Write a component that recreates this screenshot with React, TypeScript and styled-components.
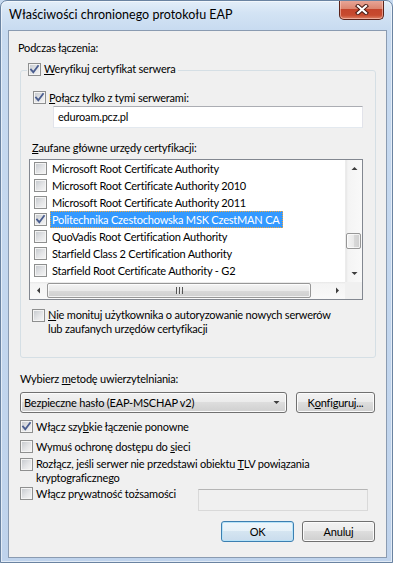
import React from "react";
import styled, { createGlobalStyle } from "styled-components";

const Global = createGlobalStyle`
  html, body { margin: 0; padding: 0; background: #c6d9ef; }
  body { font-family: Lato, "Noto Sans", sans-serif; font-size: 11px; letter-spacing: -0.2px; color: #000; }
  * { box-sizing: border-box; }
`;

const Window = styled.div`
  width: 393px;
  height: 563px;
  border: 1px solid #6a83a1;
  border-radius: 7px 7px 0 0;
  background: linear-gradient(180deg, #e3eef9 0px, #d3e3f4 12px, #c7daf0 30px, #bfd3ec 100%);
  box-shadow: inset 0 0 0 1px rgba(255, 255, 255, 0.55);
  display: flex;
  flex-direction: column;
  overflow: hidden;
`;

const TitleBar = styled.div`
  height: 29px;
  display: flex;
  align-items: flex-start;
  justify-content: space-between;
  padding-left: 8px;
`;

const Title = styled.div`
  font-size: 12.5px;
  letter-spacing: 0;
  line-height: 15px;
  margin-top: 6px;
  color: #000;
`;

const CloseBtn = styled.div`
  width: 45px;
  height: 20px;
  margin-top: -1px;
  margin-right: 8px;
  border: 1px solid #5a2219;
  border-top: none;
  border-radius: 0 0 5px 5px;
  background: linear-gradient(180deg, #e9a99b 0%, #dc8670 45%, #c4452c 50%, #c74a2f 80%, #dd8266 100%);
  box-shadow: inset 0 0 0 1px rgba(255, 210, 200, 0.55);
  display: flex;
  align-items: center;
  justify-content: center;
`;

const Client = styled.div`
  flex: 1;
  margin: 0 5px 4px 7px;
  border: 1px solid #8a9bb1;
  background: #f0f0f0;
  display: flex;
  flex-direction: column;
`;

const Heading = styled.div`
  line-height: 15px;
  margin: 9px 0 0 9px;
`;

const Group = styled.div`
  margin: 15px 10px 0 11px;
  border: 1px solid #d5dfe5;
  border-radius: 3px;
  padding-bottom: 22px;
  display: flex;
  flex-direction: column;
  align-items: flex-start;
`;

const Legend = styled.div`
  margin: -9px 0 0 6px;
  padding: 0 3px 0 1px;
  background: #f0f0f0;
  display: flex;
  align-items: center;
  gap: 3px;
  line-height: 14px;
`;

const Row = styled.div<{ $mt: number; $ml: number }>`
  display: flex;
  align-items: flex-start;
  gap: 3px;
  margin-top: ${(p) => p.$mt}px;
  margin-left: ${(p) => p.$ml}px;
  line-height: 14px;
`;

const RowText = styled.span<{ $lh?: number }>`
  line-height: ${(p) => p.$lh ?? 14}px;
`;

const Key = styled.span`
  text-decoration: underline;
  text-underline-offset: 1px;
`;

const TextBox = styled.div`
  align-self: stretch;
  height: 22px;
  margin: 1px 12px 0 32px;
  background: #fff;
  border: 1px solid #e2e3ea;
  border-top-color: #abadb3;
  border-bottom-color: #e3e9ef;
  padding: 0 4px;
  line-height: 19px;
`;

const Label = styled.div<{ $mt: number; $ml: number }>`
  line-height: 14px;
  margin-top: ${(p) => p.$mt}px;
  margin-left: ${(p) => p.$ml}px;
`;

const ListBox = styled.div`
  align-self: stretch;
  height: 141px;
  margin: 4px 12px 0 8px;
  border: 1px solid #828790;
  background: #fff;
  display: grid;
  grid-template-columns: 1fr 17px;
  grid-template-rows: 1fr 17px;
  overflow: hidden;
`;

const Items = styled.div`
  overflow: hidden;
  display: flex;
  flex-direction: column;
`;

const Item = styled.div`
  height: 17px;
  display: flex;
  align-items: center;
  padding-left: 4px;
  gap: 3px;
  white-space: nowrap;
`;

const ItemText = styled.span<{ $sel?: boolean }>`
  padding: 0 2px 0 1px;
  line-height: 15px;
  border: 1px dotted ${(p) => (p.$sel ? "#f2a53c" : "transparent")};
  background: ${(p) => (p.$sel ? "#3399ff" : "transparent")};
  color: ${(p) => (p.$sel ? "#fff" : "#000")};
`;

const VScroll = styled.div`
  display: flex;
  flex-direction: column;
  background: linear-gradient(90deg, #e7e7e7 0px, #f4f4f4 2px, #f9f9f9 100%);
  border-left: 1px solid #ececec;
`;

const HScroll = styled.div`
  display: flex;
  background: linear-gradient(180deg, #e7e7e7 0px, #f4f4f4 2px, #f9f9f9 100%);
`;

const Corner = styled.div`
  background: #f0f0f0;
`;

const ArrowBtn = styled.div`
  width: 16px;
  height: 17px;
  flex-shrink: 0;
  display: flex;
  align-items: center;
  justify-content: center;
`;

const VThumb = styled.div<{ $top: number }>`
  margin: ${(p) => p.$top}px 1px 0 0;
  height: 16px;
  border: 1px solid #979797;
  border-radius: 2px;
  background: linear-gradient(90deg, #f4f4f4 0%, #e9e9e9 50%, #d9d9d9 51%, #cfcfcf 100%);
  box-shadow: inset 0 0 0 1px rgba(255, 255, 255, 0.7);
`;

const VSpacer = styled.div`
  flex: 1;
`;

const HThumb = styled.div<{ $w: number }>`
  width: ${(p) => p.$w}px;
  margin: 1px 0 1px 1px;
  border: 1px solid #979797;
  border-radius: 2px;
  background: linear-gradient(180deg, #f4f4f4 0%, #e9e9e9 50%, #d9d9d9 51%, #cfcfcf 100%);
  box-shadow: inset 0 0 0 1px rgba(255, 255, 255, 0.7);
  display: flex;
  align-items: center;
  justify-content: center;
`;

const HTrack = styled.div`
  flex: 1;
  display: flex;
`;

const Grip = styled.div`
  width: 7px;
  height: 7px;
  background: repeating-linear-gradient(90deg, #555 0px, #555 1px, #e8e8e8 1px, #e8e8e8 2px, transparent 2px, transparent 3px);
`;

const ComboRow = styled.div`
  display: flex;
  align-items: flex-start;
  gap: 9px;
  margin: 6px 0 0 11px;
`;

const buttonFace = `
  border: 1px solid #707070;
  border-radius: 3px;
  background: linear-gradient(180deg, #f2f2f2 0%, #ebebeb 48%, #dddddd 50%, #cfcfcf 100%);
  box-shadow: inset 0 0 0 1px #fbfbfb;
`;

const Combo = styled.div`
  ${buttonFace}
  width: 267px;
  height: 21px;
  display: flex;
  align-items: center;
  justify-content: space-between;
  padding: 0 6px 0 3px;
`;

const PushButton = styled.div<{ $w: number; $def?: boolean }>`
  ${buttonFace}
  width: ${(p) => p.$w}px;
  height: 21px;
  display: flex;
  align-items: center;
  justify-content: center;
  line-height: 14px;
  ${(p) =>
    p.$def
      ? `border-color: #3c7fb1; box-shadow: inset 0 0 0 1px #b7e3f8; background: linear-gradient(180deg, #eef6fb 0%, #e6f1f8 48%, #d5e5f1 50%, #c9dced 100%);`
      : ""}
`;

const CheckRow = styled.div<{ $mt: number }>`
  display: flex;
  align-items: flex-start;
  gap: 3px;
  margin: ${(p) => p.$mt}px 0 0 11px;
`;

const IdentityRow = styled.div`
  display: flex;
  align-items: flex-start;
  margin: 3px 0 0 11px;
`;

const IdentityLabel = styled.div`
  width: 178px;
  flex-shrink: 0;
  display: flex;
  align-items: flex-start;
  gap: 3px;
`;

const DisabledBox = styled.div`
  width: 170px;
  height: 22px;
  margin-top: 2px;
  border: 1px solid #d9d9d9;
  border-top-color: #b5b5b5;
  background: #f0f0f0;
`;

const ButtonRow = styled.div`
  display: flex;
  justify-content: flex-end;
  gap: 8px;
  margin: 10px 11px 0 0;
`;

const Box = styled.span<{ $mt?: number }>`
  width: 13px;
  height: 13px;
  flex-shrink: 0;
  margin-top: ${(p) => p.$mt ?? 0}px;
  border: 1px solid #8e8f8f;
  background: linear-gradient(135deg, #c3c7cc 0%, #e4e5e7 55%, #f6f6f6 100%);
  box-shadow: inset 0 0 0 1px #f4f4f4;
  display: inline-flex;
  align-items: center;
  justify-content: center;
`;

function Check({ on, mt }: { on?: boolean; mt?: number }) {
  return (
    <Box $mt={mt}>
      {on && (
        <svg width="11" height="11" viewBox="0 0 11 11">
          <path d="M2 5.5 L4.3 8.2 L9 2" fill="none" stroke="#4a5d8f" strokeWidth="1.8" strokeLinecap="square" />
        </svg>
      )}
    </Box>
  );
}

function Tri({ dir }: { dir: "up" | "down" | "left" | "right" }) {
  const pts = {
    up: "0.5,4 3.5,1 6.5,4",
    down: "0.5,1 3.5,4 6.5,1",
    left: "4,0.5 1,3.5 4,6.5",
    right: "1,0.5 4,3.5 1,6.5",
  }[dir];
  const vert = dir === "up" || dir === "down";
  return (
    <svg width={vert ? 7 : 5} height={vert ? 5 : 7} viewBox={vert ? "0 0 7 5" : "0 0 5 7"}>
      <polygon points={pts} fill="#3d3d3d" />
    </svg>
  );
}

const certs: { name: string; on?: boolean; sel?: boolean }[] = [
  { name: "Microsoft Root Certificate Authority" },
  { name: "Microsoft Root Certificate Authority 2010" },
  { name: "Microsoft Root Certificate Authority 2011" },
  { name: "Politechnika Czestochowska MSK CzestMAN CA", on: true, sel: true },
  { name: "QuoVadis Root Certification Authority" },
  { name: "Starfield Class 2 Certification Authority" },
  { name: "Starfield Root Certificate Authority - G2" },
];

export default function App() {
  return (
    <>
      <Global />
      <Window>
        <TitleBar>
          <Title>Właściwości chronionego protokołu EAP</Title>
          <CloseBtn>
            <svg width="14" height="11" viewBox="0 0 14 11">
              <path d="M3 2 L11 9 M11 2 L3 9" stroke="#4b1d16" strokeWidth="4.2" strokeLinecap="square" />
              <path d="M3 2 L11 9 M11 2 L3 9" stroke="#ffffff" strokeWidth="2.2" strokeLinecap="square" />
            </svg>
          </CloseBtn>
        </TitleBar>
        <Client>
          <Heading>Podczas łączenia:</Heading>
          <Group>
            <Legend>
              <Check on />
              <span>
                <Key>W</Key>eryfikuj certyfikat serwera
              </span>
            </Legend>
            <Row $mt={15} $ml={12}>
              <Check on />
              <RowText>
                <Key>P</Key>ołącz tylko z tymi serwerami:
              </RowText>
            </Row>
            <TextBox>eduroam.pcz.pl</TextBox>
            <Label $mt={13} $ml={11}>
              <Key>Z</Key>aufane główne urzędy certyfikacji:
            </Label>
            <ListBox>
              <Items>
                {certs.map((c) => (
                  <Item key={c.name}>
                    <Check on={c.on} />
                    <ItemText $sel={c.sel}>{c.name}</ItemText>
                  </Item>
                ))}
              </Items>
              <VScroll>
                <ArrowBtn>
                  <Tri dir="up" />
                </ArrowBtn>
                <VThumb $top={56} />
                <VSpacer />
                <ArrowBtn>
                  <Tri dir="down" />
                </ArrowBtn>
              </VScroll>
              <HScroll>
                <ArrowBtn>
                  <Tri dir="left" />
                </ArrowBtn>
                <HTrack>
                  <HThumb $w={264}>
                    <Grip />
                  </HThumb>
                </HTrack>
                <ArrowBtn>
                  <Tri dir="right" />
                </ArrowBtn>
              </HScroll>
              <Corner />
            </ListBox>
            <Row $mt={8} $ml={11}>
              <Check mt={1} />
              <RowText $lh={13.5}>
                <Key>N</Key>ie monituj użytkownika o autoryzowanie nowych serwerów
                <br />
                lub zaufanych urzędów certyfikacji
              </RowText>
            </Row>
          </Group>
          <Label $mt={14} $ml={11}>
            Wybierz <Key>m</Key>etodę uwierzytelniania:
          </Label>
          <ComboRow>
            <Combo>
              <span>Bezpieczne hasło (EAP-MSCHAP v2)</span>
              <Tri dir="down" />
            </Combo>
            <PushButton $w={79}>
              K<Key>o</Key>nfiguruj...
            </PushButton>
          </ComboRow>
          <CheckRow $mt={7}>
            <Check on />
            <RowText>
              Włącz szy<Key>b</Key>kie łączenie ponowne
            </RowText>
          </CheckRow>
          <CheckRow $mt={6}>
            <Check />
            <RowText>
              Wymuś ochronę dostępu do <Key>s</Key>ieci
            </RowText>
          </CheckRow>
          <CheckRow $mt={3}>
            <Check mt={1} />
            <RowText $lh={13.5}>
              Rozłącz, jeśli serwer nie przedstawi obiektu <Key>T</Key>LV powiązania
              <br />
              kryptograficznego
            </RowText>
          </CheckRow>
          <IdentityRow>
            <IdentityLabel>
              <Check />
              <RowText>
                Włącz pr<Key>y</Key>watność tożsamości
              </RowText>
            </IdentityLabel>
            <DisabledBox />
          </IdentityRow>
          <ButtonRow>
            <PushButton $w={73} $def>
              OK
            </PushButton>
            <PushButton $w={73}>Anuluj</PushButton>
          </ButtonRow>
        </Client>
      </Window>
    </>
  );
}
